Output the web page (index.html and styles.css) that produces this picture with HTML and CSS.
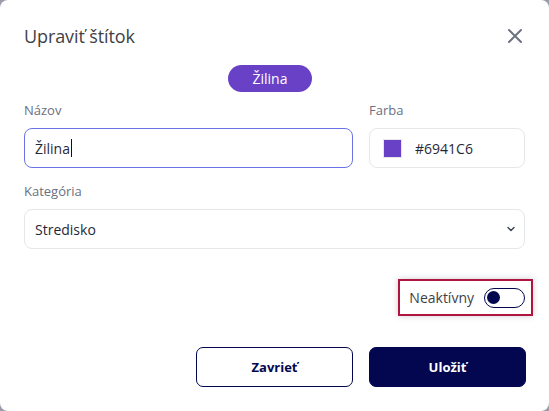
FILE: index.html
```html
<!DOCTYPE html>
<html lang="sk">
<head>
<meta charset="utf-8">
<title>Upraviť štítok</title>
<link rel="stylesheet" href="styles.css">
</head>
<body>
<div class="modal">
  <div class="header">
    <h1 class="title">Upraviť štítok</h1>
    <button class="close" aria-label="Zavrieť">
      <svg width="16" height="16" viewBox="0 0 16 16"><path d="M2 2L14 14M14 2L2 14" stroke="#6b7280" stroke-width="2" stroke-linecap="round"/></svg>
    </button>
  </div>
  <div class="preview"><span class="pill">Žilina</span></div>
  <div class="row">
    <div class="field">
      <label class="label">Názov</label>
      <div class="input focused"><span>Žilina</span><span class="caret"></span></div>
    </div>
    <div class="field">
      <label class="label">Farba</label>
      <div class="input color"><span class="swatch"></span><span>#6941C6</span></div>
    </div>
  </div>
  <div class="field">
    <label class="label">Kategória</label>
    <div class="input select"><span>Stredisko</span>
      <svg width="10" height="6" viewBox="0 0 10 6"><path d="M2 1.5L5 4.5L8 1.5" stroke="#374151" stroke-width="1.4" fill="none" stroke-linecap="round" stroke-linejoin="round"/></svg>
    </div>
  </div>
  <div class="toggle-row">
    <div class="toggle-box">
      <span class="toggle-label">Neaktívny</span>
      <span class="switch"><span class="knob"></span></span>
    </div>
  </div>
  <div class="actions">
    <button class="btn btn-outline">Zavrieť</button>
    <button class="btn btn-solid">Uložiť</button>
  </div>
</div>
</body>
</html>
```
FILE: styles.css
```css
* { box-sizing: border-box; }
html, body { margin: 0; padding: 0; }
body {
  width: 549px;
  height: 411px;
  background: #9a9cab;
  font-family: "Open Sans", "Noto Sans", sans-serif;
  overflow: hidden;
}
.modal {
  width: 549px;
  height: 411px;
  background: #fff;
  border-radius: 8px;
  padding: 0 24px;
  display: flex;
  flex-direction: column;
}
.header {
  display: flex;
  align-items: center;
  justify-content: space-between;
  height: 36px;
  margin-top: 18px;
}
.title {
  margin: 0;
  font-size: 18px;
  font-weight: 500;
  color: #3f3f46;
  letter-spacing: -0.1px;
}
.close {
  border: 0;
  background: none;
  padding: 0;
  width: 18px;
  height: 18px;
  display: flex;
  align-items: center;
  justify-content: center;
  margin-right: 1px;
}
.preview {
  display: flex;
  justify-content: center;
  margin-top: 11px;
  padding-right: 9px;
}
.pill {
  background: #6941c6;
  color: #fff;
  font-size: 14px;
  font-weight: 500;
  height: 27px;
  line-height: 27px;
  padding: 0 20px;
  border-radius: 14px;
  min-width: 84px;
  text-align: center;
}
.row {
  display: grid;
  grid-template-columns: 1fr 156px;
  gap: 16px;
  margin-top: 8px;
}
.field { display: flex; flex-direction: column; }
.label {
  font-size: 13px;
  color: #6b6f80;
  height: 20px;
  line-height: 20px;
  margin-bottom: 8px;
}
.input {
  height: 40px;
  border: 1px solid #e5e7eb;
  border-radius: 8px;
  display: flex;
  align-items: center;
  padding: 0 10px;
  font-size: 14px;
  color: #1f2937;
}
.input.focused { border-color: #6a73e6; }
.caret {
  display: inline-block;
  width: 1px;
  height: 18px;
  background: #111;
  margin-left: 1px;
}
.color { padding-left: 13px; }
.swatch {
  width: 19px;
  height: 19px;
  background: #6941c6;
  border: 1px solid #e5e7eb;
  margin-right: 13px;
}
.select { justify-content: space-between; padding-right: 8px; }
.row + .field { margin-top: 13px; }
.toggle-row {
  display: flex;
  justify-content: flex-end;
  margin-top: 30px;
  margin-right: -8px;
}
.toggle-box {
  display: flex;
  align-items: center;
  height: 37px;
  padding: 0 6px 0 9px;
  border: 2px solid #b01540;
  box-shadow: 0 0 6px rgba(60, 60, 90, 0.25);
  gap: 10px;
}
.toggle-label { font-size: 14px; color: #3f3f46; }
.switch {
  width: 41px;
  height: 20px;
  border: 1.5px solid #03074f;
  border-radius: 10px;
  display: flex;
  align-items: center;
  padding-left: 2px;
}
.knob {
  width: 13px;
  height: 13px;
  border-radius: 50%;
  background: #03074f;
}
.actions {
  display: flex;
  justify-content: flex-end;
  gap: 16px;
  margin-top: 31px;
  margin-right: -1px;
}
.btn {
  width: 157px;
  height: 40px;
  border-radius: 7px;
  font-family: inherit;
  font-size: 13px;
  font-weight: 700;
}
.btn-outline { background: #fff; border: 1px solid #03074f; color: #03074f; }
.btn-solid { background: #03074f; border: 1px solid #03074f; color: #fff; }
```
